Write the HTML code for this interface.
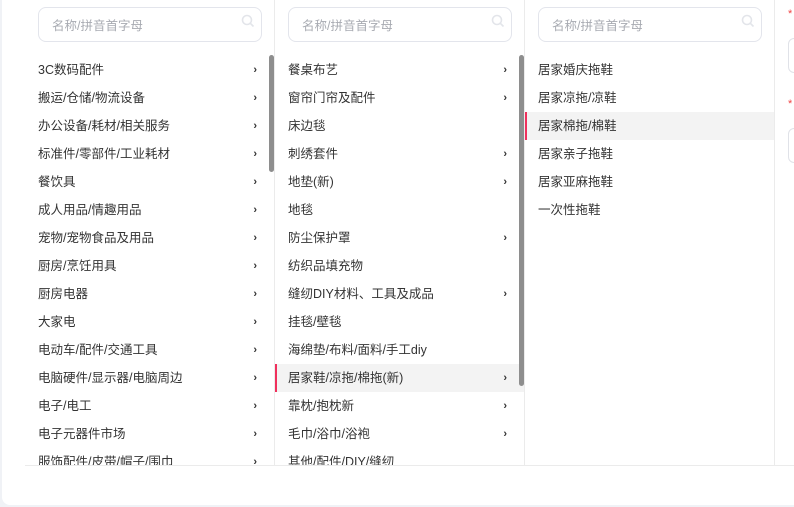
<!DOCTYPE html>
<html><head><meta charset="utf-8"><style>
*{margin:0;padding:0;box-sizing:border-box}
body{width:794px;height:507px;background:#f0f2f6;position:relative;overflow:hidden;font-family:"Liberation Sans","Noto Sans CJK SC",sans-serif;font-size:12.5px;color:#333}
.card{position:absolute;left:2px;top:-10px;width:800px;height:515px;background:#fff;border-radius:8px}
.panel{position:absolute;left:25px;top:0;width:775px;height:466px;border-bottom:1px solid #ebebeb;overflow:hidden}
.col{position:absolute;top:0;width:250px;height:466px;border-right:1px solid #ebebeb;overflow:hidden}
.search{position:absolute;left:13px;top:7px;width:224px;height:35px;border:1px solid #e3e5ec;border-radius:8px;color:#a8abb2;font-size:12.5px;line-height:33px;padding-left:13px;padding-top:2px}
.search svg{position:absolute;right:6px;top:6px}
.list{position:absolute;top:56px;left:0;width:249px}
.row{height:28px;line-height:28px;padding-left:13px;position:relative;white-space:nowrap}
.row.a{background:#f3f3f3}
.row.a:before{content:"";position:absolute;left:0;top:0;width:2px;height:28px;background:#f0305c}
.row i{position:absolute;right:17px;top:0;font-style:normal;font-weight:bold;font-size:11px;color:#333}
.sb{position:absolute;width:5px;background:#8e8e8e;border-radius:3px}
.star{position:absolute;left:788px;color:#f04444;font-size:11px}
.box{position:absolute;left:788px;width:20px;height:35px;border:1px solid #e0e2e8;border-radius:6px}
</style></head><body>
<div class="card"></div>
<div class="panel">
<div class="col" style="left:0">
<div class="search">名称/拼音首字母<svg width="14" height="14" viewBox="0 0 14 14"><circle cx="6" cy="6" r="4.5" fill="none" stroke="#e3e5ea" stroke-width="1.6"/><path d="M9.5 9.5L12.5 12.5" stroke="#e3e5ea" stroke-width="1.6"/></svg></div>
<div class="list">
<div class="row">3C数码配件<i>›</i></div>
<div class="row">搬运/仓储/物流设备<i>›</i></div>
<div class="row">办公设备/耗材/相关服务<i>›</i></div>
<div class="row">标准件/零部件/工业耗材<i>›</i></div>
<div class="row">餐饮具<i>›</i></div>
<div class="row">成人用品/情趣用品<i>›</i></div>
<div class="row">宠物/宠物食品及用品<i>›</i></div>
<div class="row">厨房/烹饪用具<i>›</i></div>
<div class="row">厨房电器<i>›</i></div>
<div class="row">大家电<i>›</i></div>
<div class="row">电动车/配件/交通工具<i>›</i></div>
<div class="row">电脑硬件/显示器/电脑周边<i>›</i></div>
<div class="row">电子/电工<i>›</i></div>
<div class="row">电子元器件市场<i>›</i></div>
<div class="row">服饰配件/皮带/帽子/围巾<i>›</i></div>
</div>
<div class="sb" style="left:244px;top:55px;height:117px"></div>
</div>
<div class="col" style="left:250px">
<div class="search">名称/拼音首字母<svg width="14" height="14" viewBox="0 0 14 14"><circle cx="6" cy="6" r="4.5" fill="none" stroke="#e3e5ea" stroke-width="1.6"/><path d="M9.5 9.5L12.5 12.5" stroke="#e3e5ea" stroke-width="1.6"/></svg></div>
<div class="list">
<div class="row">餐桌布艺<i>›</i></div>
<div class="row">窗帘门帘及配件<i>›</i></div>
<div class="row">床边毯</div>
<div class="row">刺绣套件<i>›</i></div>
<div class="row">地垫(新)<i>›</i></div>
<div class="row">地毯</div>
<div class="row">防尘保护罩<i>›</i></div>
<div class="row">纺织品填充物</div>
<div class="row">缝纫DIY材料、工具及成品<i>›</i></div>
<div class="row">挂毯/壁毯</div>
<div class="row">海绵垫/布料/面料/手工diy</div>
<div class="row a">居家鞋/凉拖/棉拖(新)<i>›</i></div>
<div class="row">靠枕/抱枕新<i>›</i></div>
<div class="row">毛巾/浴巾/浴袍<i>›</i></div>
<div class="row">其他/配件/DIY/缝纫</div>
</div>
<div class="sb" style="left:244px;top:55px;height:331px"></div>
</div>
<div class="col" style="left:500px">
<div class="search">名称/拼音首字母<svg width="14" height="14" viewBox="0 0 14 14"><circle cx="6" cy="6" r="4.5" fill="none" stroke="#e3e5ea" stroke-width="1.6"/><path d="M9.5 9.5L12.5 12.5" stroke="#e3e5ea" stroke-width="1.6"/></svg></div>
<div class="list">
<div class="row">居家婚庆拖鞋</div>
<div class="row">居家凉拖/凉鞋</div>
<div class="row a">居家棉拖/棉鞋</div>
<div class="row">居家亲子拖鞋</div>
<div class="row">居家亚麻拖鞋</div>
<div class="row">一次性拖鞋</div>
</div>
</div>
</div>
<div class="star" style="top:8px">*</div>
<div class="box" style="top:38px"></div>
<div class="star" style="top:98px">*</div>
<div class="box" style="top:128px"></div>
</body></html>
